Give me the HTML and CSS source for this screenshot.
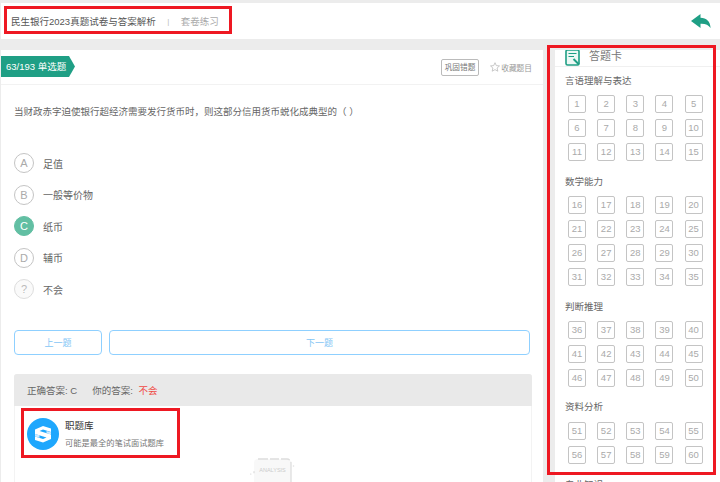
FILE: index.html
```html
<!DOCTYPE html>
<html lang="zh">
<head>
<meta charset="utf-8">
<title>答题卡</title>
<link rel="stylesheet" href="styles.css">
</head>
<body>
<header class="topbar">
  <div class="crumbs"><span class="paper">民生银行2023真题试卷与答案解析</span><span class="sep">|</span><span class="mode">套卷练习</span></div>
  <svg class="back" width="20" height="14" viewBox="0 0 20 14"><path d="M0 7 9.5 0V3.8C15.5 3.8 19.2 7.5 19.6 14 17.5 11 14.5 9.6 9.5 9.8V14Z" fill="#1f9f85"/></svg>
</header>
<div class="content">
  <main class="main">
    <div class="qhead">
      <div class="tag">63/193 单选题</div>
      <div class="tools">
        <span class="fix">巩固错题</span>
        <span class="fav"><svg width="10" height="10" viewBox="0 0 10 10"><path d="M5 .7 6.3 3.6 9.5 3.9 7.1 6 7.8 9.2 5 7.6 2.2 9.2 2.9 6 .5 3.9 3.7 3.6Z" fill="none" stroke="#bbb" stroke-width=".8"/></svg>收藏题目</span>
      </div>
    </div>
    <p class="question">当财政赤字迫使银行超经济需要发行货币时，则这部分信用货币蜕化成典型的（ ）</p>
    <ul class="options">
      <li class="option"><span class="letter">A</span>足值</li>
      <li class="option"><span class="letter">B</span>一般等价物</li>
      <li class="option"><span class="letter correct">C</span>纸币</li>
      <li class="option"><span class="letter">D</span>辅币</li>
      <li class="option"><span class="letter unknown">?</span>不会</li>
    </ul>
    <div class="nav">
      <button class="btn prev">上一题</button>
      <button class="btn next">下一题</button>
    </div>
    <section class="answer">
      <div class="answer-head"><span>正确答案: C</span><span>你的答案: <em class="wrong">不会</em></span></div>
      <div class="brand">
        <svg class="logo" width="32" height="32" viewBox="0 0 32 32"><circle cx="16" cy="16" r="16" fill="#1ea7fd"/><path d="M8 11.5 16 8 24 10.5V14L16 11.5 12.5 13 24 16.5V21L16 24.5 8 22V18.5L16 21 19.5 19.5 8 16Z" fill="#fff"/><path d="M8 16 12.5 17.3V19.8L8 18.5ZM19.5 13 24 14.3V16.5L19.5 15.2Z" fill="#cfeaff"/></svg>
        <div class="brand-text"><strong>职题库</strong><span>可能是最全的笔试面试题库</span></div>
      </div>
      <svg class="analysis" width="46" height="32" viewBox="0 0 46 32"><rect x="4" y="1" width="37" height="38" rx="4" fill="#f8f8f8" stroke="#ddd" stroke-width="1.3" stroke-dasharray="10 2 9 2 9 2 60"/><text x="22.5" y="14" text-anchor="middle" class="analysis-text">ANALYSIS</text><circle cx="43.5" cy="8" r=".8" fill="#e0e0e0"/><circle cx="0.8" cy="16" r=".6" fill="#ccc"/></svg>
    </section>
  </main>
  <aside class="card">
    <div class="card-head">
      <svg width="17" height="17" viewBox="0 0 17 17"><rect x="1" y="1" width="13" height="15" rx="1.5" fill="#eef8f5" stroke="#1f9f85" stroke-width="1.6"/><path d="M3.5 4.5H11.5M3.5 7.5H9" stroke="#1f9f85" stroke-width="1.2"/><path d="M8.5 10 14 15.5" stroke="#1f9f85" stroke-width="2"/></svg>
      <span>答题卡</span>
    </div>
    <div class="section">
      <h3>言语理解与表达</h3>
      <div class="grid"><a>1</a><a>2</a><a>3</a><a>4</a><a>5</a><a>6</a><a>7</a><a>8</a><a>9</a><a>10</a><a>11</a><a>12</a><a>13</a><a>14</a><a>15</a></div>
    </div>
    <div class="section">
      <h3>数学能力</h3>
      <div class="grid"><a>16</a><a>17</a><a>18</a><a>19</a><a>20</a><a>21</a><a>22</a><a>23</a><a>24</a><a>25</a><a>26</a><a>27</a><a>28</a><a>29</a><a>30</a><a>31</a><a>32</a><a>33</a><a>34</a><a>35</a></div>
    </div>
    <div class="section">
      <h3>判断推理</h3>
      <div class="grid"><a>36</a><a>37</a><a>38</a><a>39</a><a>40</a><a>41</a><a>42</a><a>43</a><a>44</a><a>45</a><a>46</a><a>47</a><a>48</a><a>49</a><a>50</a></div>
    </div>
    <div class="section short">
      <h3>资料分析</h3>
      <div class="grid"><a>51</a><a>52</a><a>53</a><a>54</a><a>55</a><a>56</a><a>57</a><a>58</a><a>59</a><a>60</a></div>
    </div>
    <div class="section">
      <h3>专业知识</h3>
    </div>
  </aside>
</div>
<div class="mark mark-title"></div>
<div class="mark mark-card"></div>
<div class="mark mark-brand"></div>
</body>
</html>
```
FILE: styles.css
```css
* { box-sizing: border-box; }
html, body { height: 482px; overflow: hidden; }
body {
  margin: 0;
  position: relative;
  background: #ececec;
  font-family: "Liberation Sans", "Noto Sans CJK SC", sans-serif;
  font-size: 9.5px;
  color: #666;
}
.topbar {
  margin: 3px 0 0 1px;
  height: 36px;
  background: #fff;
  display: flex;
  align-items: center;
  justify-content: space-between;
  padding: 0 9px 0 10px;
}
.crumbs { display: flex; align-items: center; }
.paper { color: #555; }
.sep { margin: 0 11.5px; color: #bbb; font-size: 8px; }
.mode { color: #aaa; }
.back { margin-top: 0; }
.content { display: flex; margin-top: 11px; gap: 12px; margin-left: 1px; height: 432px; }
.main { width: 542px; background: #fff; height: 432px; overflow: hidden; }
.qhead {
  height: 35px;
  border-bottom: 1px solid #f2f2f2;
  display: flex;
  justify-content: space-between;
  align-items: center;
  padding-right: 11px;
}
.tag {
  width: 75px;
  height: 21px;
  margin: -1px 0 0 -1px;
  padding-left: 6px;
  line-height: 21px;
  color: #fff;
  font-size: 9.5px;
  background: #1f9f85;
  clip-path: polygon(0 0, 69px 0, 75px 50%, 69px 100%, 0 100%);
}
.tools { display: flex; align-items: center; gap: 11px; font-size: 7.7px; color: #888; }
.fix {
  width: 38px;
  height: 17px;
  border: 1px solid #bbb;
  border-radius: 2px;
  text-align: center;
  line-height: 15px;
  color: #777;
}
.fav { display: flex; align-items: center; gap: 1.2px; color: #999; }
.question { margin: 0; padding: 20px 13px 0; line-height: 14px; color: #666; font-size: 9.5px; }
.options {
  list-style: none;
  margin: 34px 0 0;
  padding: 0 0 0 13px;
  display: flex;
  flex-direction: column;
  gap: 11.5px;
}
.option { display: flex; align-items: center; height: 20px; gap: 9px; font-size: 10px; color: #666; }
.letter {
  width: 20px;
  height: 20px;
  border: 1px solid #c4c4c4;
  border-radius: 50%;
  display: flex;
  align-items: center;
  justify-content: center;
  color: #aaa;
  font-size: 11px;
}
.correct { background: #62bfa3; border-color: #62bfa3; color: #fff; }
.unknown { background: #fafafa; border-color: #ddd; color: #bbb; }
.nav { display: flex; gap: 7px; margin: 31px 13px 0; }
.btn {
  height: 25px;
  padding: 0;
  background: #fff;
  border: 1px solid #8fd0ff;
  border-radius: 4px;
  color: #84c6f5;
  font: inherit;
  font-size: 9px;
}
.prev { width: 88px; }
.next { width: 421px; }
.answer {
  margin: 19px 11px 0 13px;
  border: 1px solid #f3f3f3;
  border-radius: 3px 3px 0 0;
  height: 120px;
  display: flow-root;
}
.answer-head {
  margin: -1px -1px 0;
  height: 32px;
  background: #e9e9e9;
  border-radius: 3px 3px 0 0;
  display: flex;
  align-items: center;
  gap: 15px;
  padding-left: 13px;
  font-size: 9.5px;
  color: #666;
}
.wrong { font-style: normal; color: #f04a45; margin-left: 3px; }
.brand { display: flex; align-items: center; gap: 6px; margin: 12px 0 0 12px; }
.brand-text { display: flex; flex-direction: column; gap: 7px; }
.brand-text strong { font-weight: 400; font-size: 9.5px; color: #333; line-height: 12px; }
.brand-text span { font-size: 8.25px; color: #777; line-height: 10px; }
.analysis { display: block; margin: 8px auto 0; }
.analysis-text { font-size: 5.5px; fill: #ccc; }
.card { flex: 1; background: #fff; height: 432px; overflow: hidden; }
.card-head {
  height: 17px;
  box-sizing: content-box;
  border-bottom: 1px solid #f0f0f0;
  display: flex;
  align-items: flex-start;
  gap: 7px;
  padding-left: 10px;
  margin-top: -1px;
  color: #777;
  font-size: 11px;
  line-height: 15px;
}
.section { padding: 5px 0 6px 10px; }
.card-head + .section { padding-top: 4px; }
.short { padding-top: 4px; }
.section h3 { margin: 0; font-weight: 400; font-size: 9.5px; color: #666; line-height: 20px; height: 20px; }
.short .grid { margin-top: 5px; }
.grid {
  display: grid;
  grid-template-columns: repeat(5, 18px);
  column-gap: 11.17px;
  row-gap: 6px;
  margin: 4px 0 0 3px;
}
.grid a {
  height: 18px;
  border: 1px solid #c4c4c4;
  border-radius: 2px;
  text-align: center;
  line-height: 16px;
  font-size: 9.5px;
  color: #aaa;
}
.mark { position: absolute; border: 3px solid #ee1822; pointer-events: none; }
.mark-title { left: 4px; top: 6px; width: 228px; height: 28px; }
.mark-card { left: 547px; top: 45px; width: 169px; height: 430px; }
.mark-brand { left: 21px; top: 408px; width: 159px; height: 50px; }
```
